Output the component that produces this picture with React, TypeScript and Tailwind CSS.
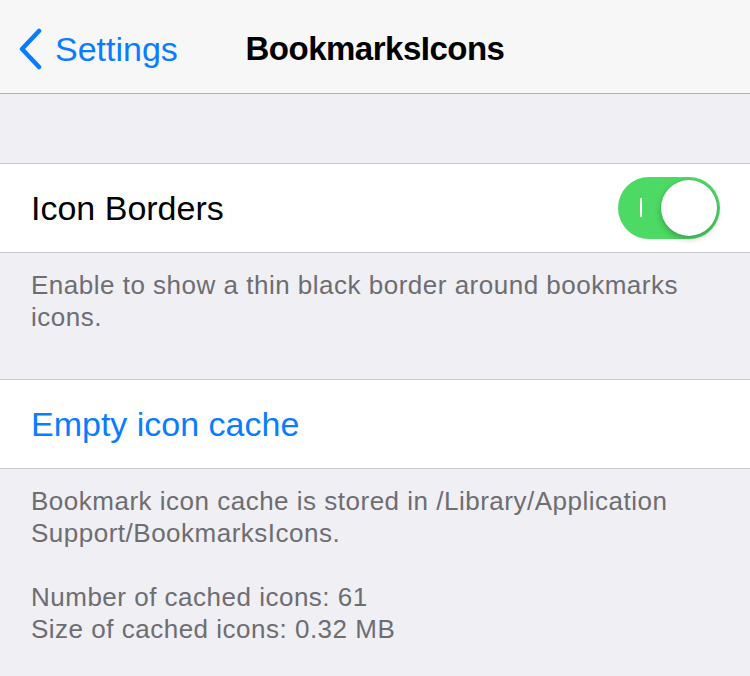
import { useState } from 'react'

const font = { fontFamily: '"Liberation Sans", Arial, sans-serif' }

function Toggle({ on, onChange }: { on: boolean; onChange: (v: boolean) => void }) {
  return (
    <button
      onClick={() => onChange(!on)}
      className={`relative w-[102px] h-[62px] rounded-full flex items-center shrink-0 transition-colors ${
        on ? 'bg-[#4cd964] justify-end' : 'bg-[#e5e5ea] justify-start'
      }`}
    >
      {on && <span className="absolute left-[22px] top-[21px] w-[2px] h-[19px] bg-white rounded-full" />}
      <span className="w-[56px] h-[56px] mx-[3px] rounded-full bg-white shadow-[0_3px_6px_rgba(0,0,0,0.25),0_0_1px_rgba(0,0,0,0.2)]" />
    </button>
  )
}

export default function App() {
  const [borders, setBorders] = useState(true)

  return (
    <div className="w-[750px] h-[676px] bg-[#efeff4] overflow-hidden" style={font}>
      <div className="h-[94px] pt-[4px] bg-[#f7f7f8] border-b border-[#b2b2b2] grid grid-cols-[1fr_auto_1fr] items-center">
        <div className="flex items-center pl-[17px] text-[#0a7cff]">
          <svg width="26" height="42" viewBox="0 0 26 42">
            <path d="M22 3 L5 21 L22 39" fill="none" stroke="#0a7cff" strokeWidth="4.5" strokeLinecap="round" strokeLinejoin="round" />
          </svg>
          <span className="ml-[12px] text-[34px] leading-none">Settings</span>
        </div>
        <h1 className="text-[33px] font-bold tracking-[-0.5px] text-black leading-none">BookmarksIcons</h1>
        <div />
      </div>

      <div className="h-[69px]" />

      <div className="h-[90px] bg-white border-y border-[#c8c7cc] flex items-center justify-between pl-[31px] pr-[30px]">
        <span className="text-[34px] text-black">Icon Borders</span>
        <Toggle on={borders} onChange={setBorders} />
      </div>

      <div className="pt-[16px] pb-[46px] px-[31px] text-[26px] leading-[32px] tracking-[0.5px] text-[#6d6d72]">
        Enable to show a thin black border around bookmarks icons.
      </div>

      <div className="h-[90px] bg-white border-y border-[#c8c7cc] flex items-center px-[31px]">
        <button className="text-[34px] text-[#0a7cff]">Empty icon cache</button>
      </div>

      <div className="pt-[16px] px-[31px] text-[26px] leading-[32px] tracking-[0.5px] text-[#6d6d72]">
        <p>Bookmark icon cache is stored in /Library/Application Support/BookmarksIcons.</p>
        <p className="mt-[32px]">Number of cached icons: 61</p>
        <p>Size of cached icons: 0.32 MB</p>
      </div>
    </div>
  )
}
